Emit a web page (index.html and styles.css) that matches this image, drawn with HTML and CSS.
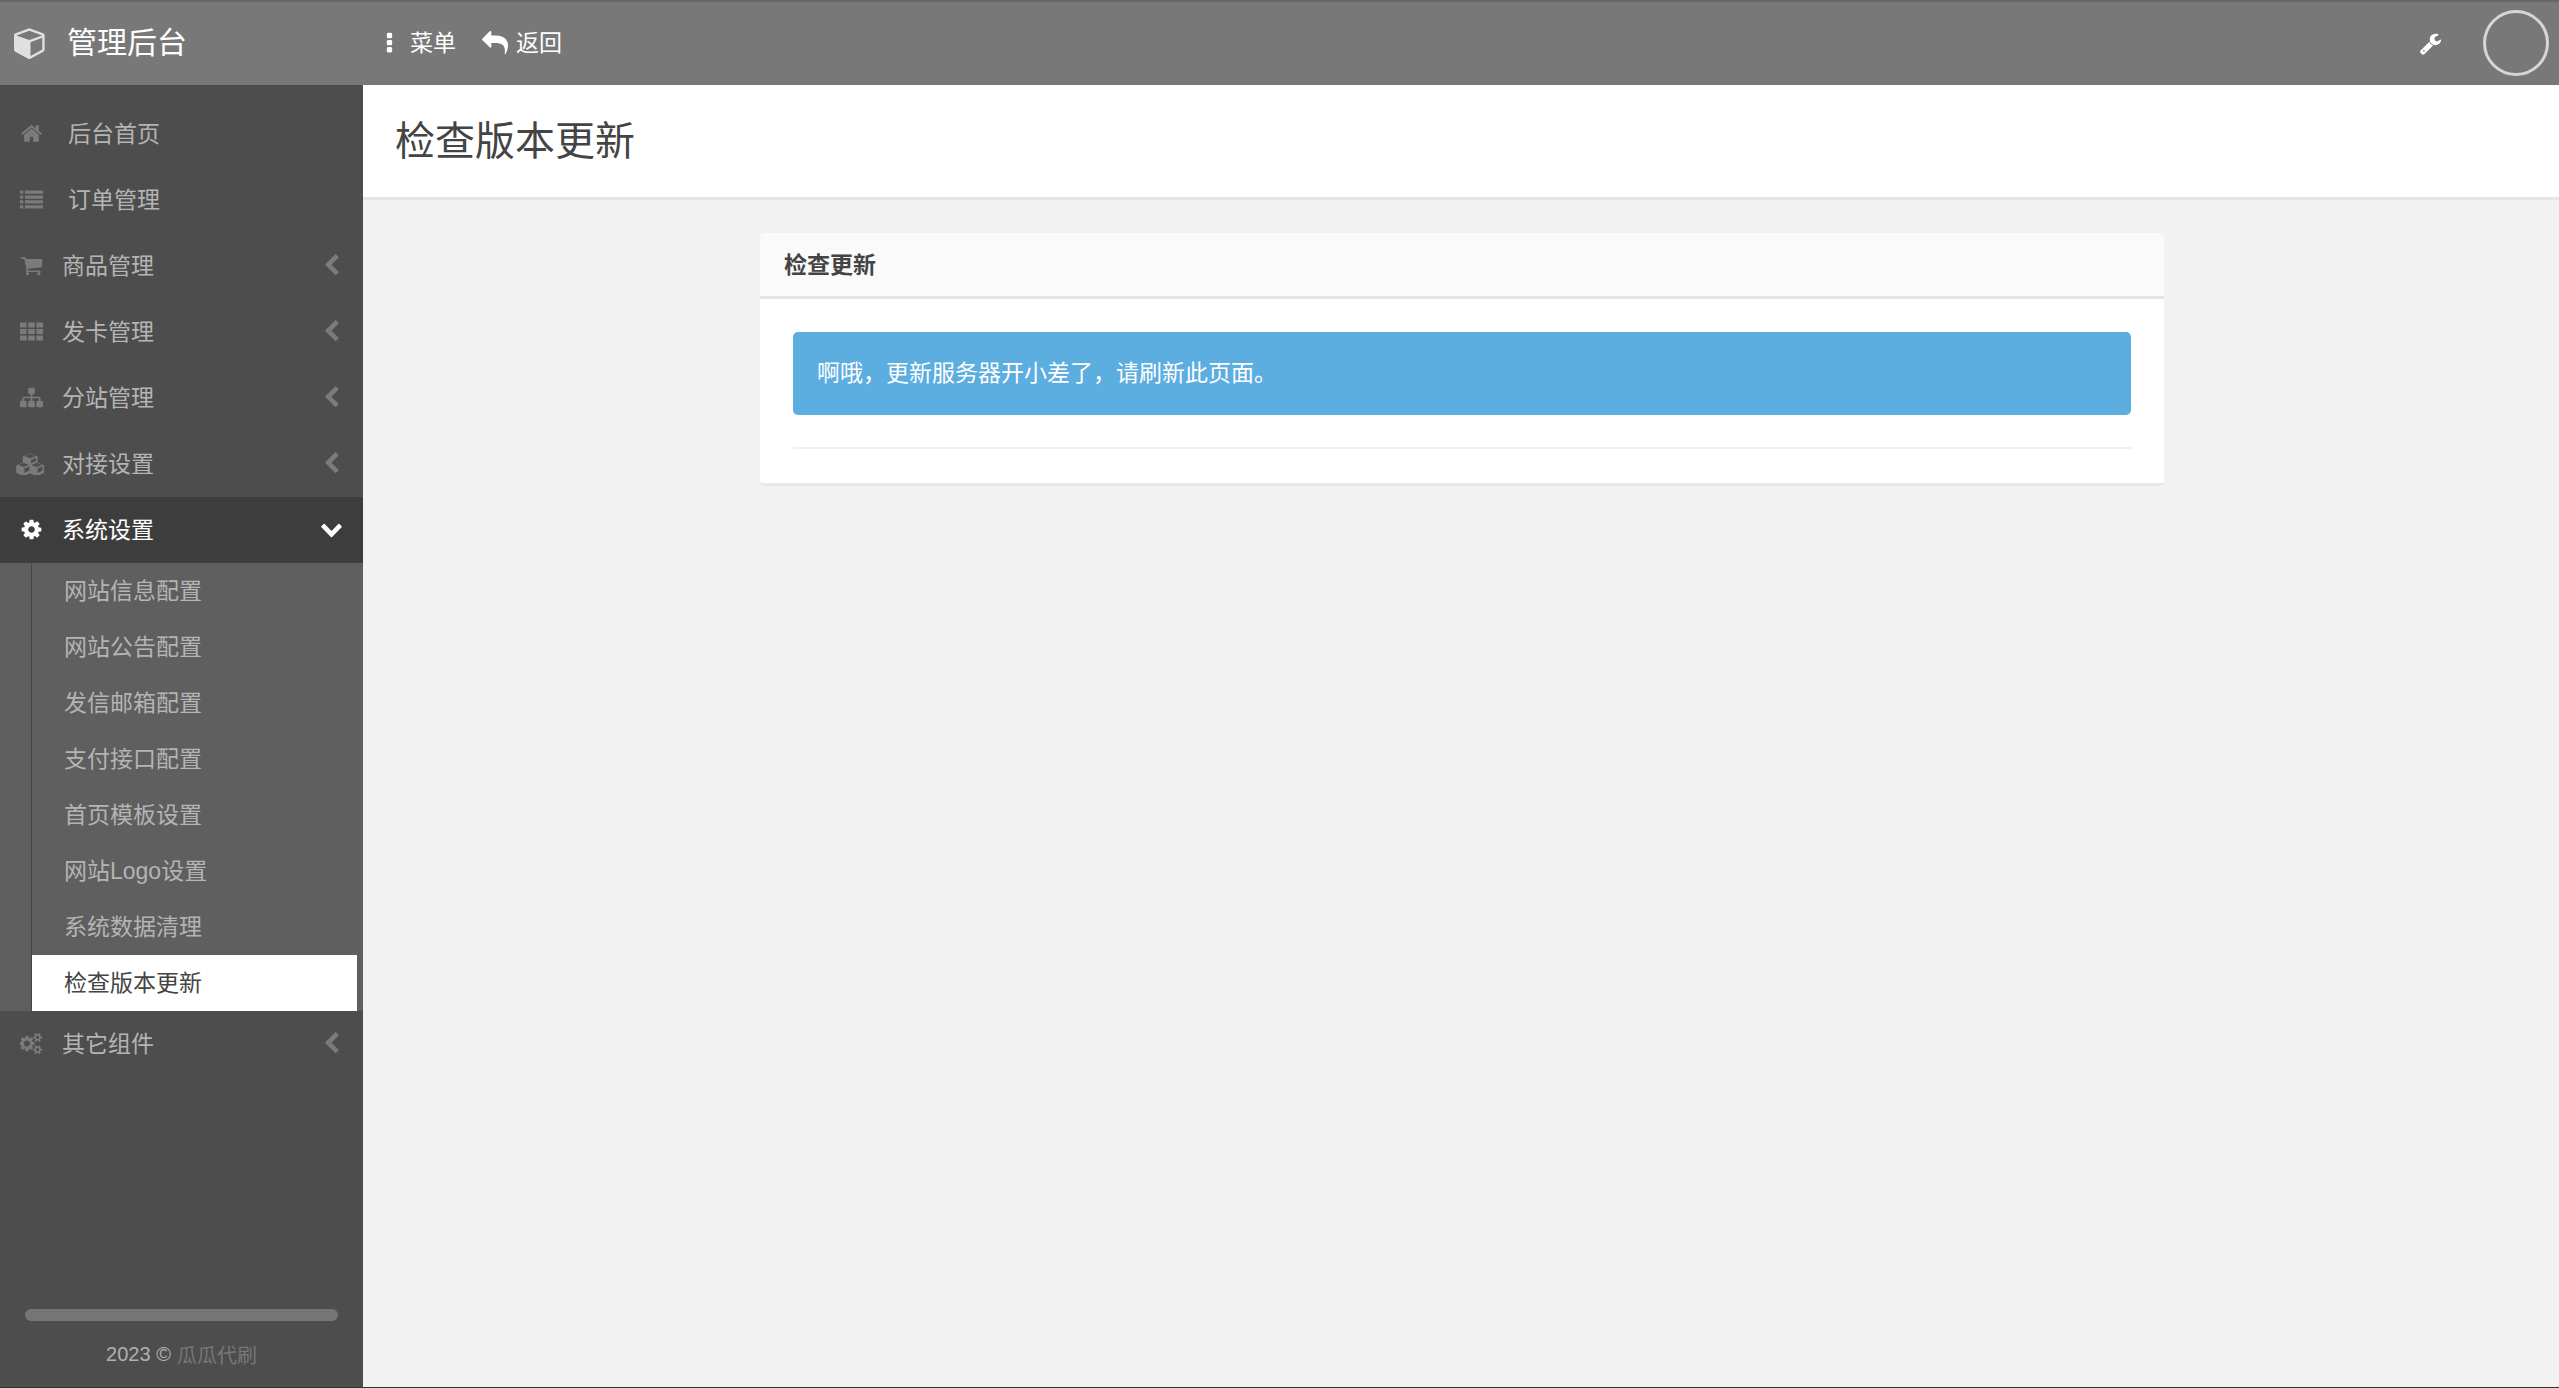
FILE: index.html
```html
<!DOCTYPE html>
<html lang="zh-CN">
<head>
<meta charset="utf-8">
<title>检查版本更新</title>
<link rel="stylesheet" href="styles.css">
</head>
<body>
<svg class="sprite" xmlns="http://www.w3.org/2000/svg">
  <symbol id="i-cube" viewBox="0 0 1792 1792"><path d="M896 1629l640-349v-636l-640 233v752zm-64-865l698-254-698-254-698 254zm832-252v768q0 35-18 65t-49 47l-704 384q-28 16-61 16t-61-16l-704-384q-31-17-49-47t-18-65v-768q0-40 23-73t61-47l704-256q22-8 44-8t44 8l704 256q38 14 61 47t23 73z"/></symbol>
  <symbol id="i-ellipsis" viewBox="0 0 1792 1792"><path d="M1088 1248v192q0 40-28 68t-68 28h-192q-40 0-68-28t-28-68v-192q0-40 28-68t68-28h192q40 0 68 28t28 68zm0-512v192q0 40-28 68t-68 28h-192q-40 0-68-28t-28-68v-192q0-40 28-68t68-28h192q40 0 68 28t28 68zm0-512v192q0 40-28 68t-68 28h-192q-40 0-68-28t-28-68v-192q0-40 28-68t68-28h192q40 0 68 28t28 68z"/></symbol>
  <symbol id="i-reply" viewBox="0 0 1792 1792"><path d="M1792 1120q0 166-127 451-3 7-10.500 24t-13.500 30-13 22q-12 17-28 17-15 0-23.500-10t-8.500-25q0-9 2.500-26.500t2.500-23.500q5-68 5-123 0-101-17.500-181t-48.500-138.500-80-101-105.500-69.500-133-42.500-154-21.500-175.500-6h-224v256q0 26-19 45t-45 19-45-19l-512-512q-19-19-19-45t19-45l512-512q19-19 45-19t45 19 19 45v256h224q713 0 875 403 53 134 53 333z"/></symbol>
  <symbol id="i-wrench" viewBox="0 0 1792 1792"><path d="M448 1472q0-26-19-45t-45-19-45 19-19 45 19 45 45 19 45-19 19-45zm644-420l-682 682q-37 37-90 37-52 0-91-37l-106-108q-38-36-38-90 0-53 38-91l681-681q39 98 114.500 173.500t173.500 114.500zm634-435q0 39-23 106-47 134-164.500 217.500t-258.500 83.500q-185 0-316.500-131.500t-131.500-316.500 131.500-316.500 316.500-131.500q58 0 121.500 16.500t107.500 46.500q16 11 16 28t-16 28l-293 169v224l193 107q5-3 79-48.500t135.500-81 70.500-35.500q15 0 23.500 10t8.500 25z"/></symbol>
  <symbol id="i-home" viewBox="0 0 1792 1792"><path d="M1472 992v480q0 26-19 45t-45 19h-384v-384h-256v384h-384q-26 0-45-19t-19-45v-480q0-1 .5-3t.5-3l575-474 575 474q1 2 1 6zm223-69l-62 74q-8 9-21 11h-3q-13 0-21-7l-692-577-692 577q-12 8-24 7-13-2-21-11l-62-74q-8-10-7-23.500t11-21.500l719-599q32-26 76-26t76 26l244 204v-195q0-14 9-23t23-9h192q14 0 23 9t9 23v408l219 182q10 8 11 21.500t-7 23.500z"/></symbol>
  <symbol id="i-list" viewBox="0 0 1792 1792"><path d="M0 192h256v256h-256zM384 192h1408v256h-1408zM0 576h256v256h-256zM384 576h1408v256h-1408zM0 960h256v256h-256zM384 960h1408v256h-1408zM0 1344h256v256h-256zM384 1344h1408v256h-1408z"/></symbol>
  <symbol id="i-cart" viewBox="0 0 1792 1792"><path d="M704 1536q0 52-38 90t-90 38-90-38-38-90 38-90 90-38 90 38 38 90zm896 0q0 52-38 90t-90 38-90-38-38-90 38-90 90-38 90 38 38 90zm128-1088v512q0 24-16.500 42.500t-40.500 21.500l-1044 122q13 60 13 70 0 16-24 64h920q26 0 45 19t19 45-19 45-45 19h-1024q-26 0-45-19t-19-45q0-11 8-31.500t16-36 21.500-40 15.500-29.500l-177-823h-204q-26 0-45-19t-19-45 19-45 45-19h256q16 0 28.500 6.500t19.500 15.500 13 24.500 8 26 5.500 29.500 4.500 26h1201q26 0 45 19t19 45z"/></symbol>
  <symbol id="i-th" viewBox="0 0 1792 1792"><path d="M0 192h512v384h-512zM640 192h512v384h-512zM1280 192h512v384h-512zM0 704h512v384h-512zM640 704h512v384h-512zM1280 704h512v384h-512zM0 1216h512v384h-512zM640 1216h512v384h-512zM1280 1216h512v384h-512z"/></symbol>
  <symbol id="i-sitemap" viewBox="0 0 1792 1792"><path d="M1792 1248v320q0 40-28 68t-68 28h-320q-40 0-68-28t-28-68v-320q0-40 28-68t68-28h96v-192h-512v192h96q40 0 68 28t28 68v320q0 40-28 68t-68 28h-320q-40 0-68-28t-28-68v-320q0-40 28-68t68-28h96v-192h-512v192h96q40 0 68 28t28 68v320q0 40-28 68t-68 28h-320q-40 0-68-28t-28-68v-320q0-40 28-68t68-28h96v-192q0-52 38-90t90-38h512v-192h-96q-40 0-68-28t-28-68v-320q0-40 28-68t68-28h320q40 0 68 28t28 68v320q0 40-28 68t-68 28h-96v192h512q52 0 90 38t38 90v192h96q40 0 68 28t28 68z"/></symbol>
  <symbol id="i-cubes" viewBox="0 0 2304 1792"><path d="M640 1632l384-192v-314l-384 164v342zm-64-454l404-173-404-173-404 173zm1088 454l384-192v-314l-384 164v342zm-64-454l404-173-404-173-404 173zm-448-293l384-165v-266l-384 164v267zm-64-379l441-189-441-189-441 189zm1088 618v416q0 36-19 67t-52 47l-448 224q-25 14-57 14t-57-14l-448-224q-4-2-7-4-2 2-6 4l-448 224q-25 14-57 14t-57-14l-448-224q-33-16-52-47t-19-67v-416q0-38 21.500-70t56.500-48l434-186v-400q0-38 21.500-70t56.500-48l448-192q23-10 50-10t50 10l448 192q35 16 56.500 48t21.500 70v400l434 186q36 16 57 48t21 70z"/></symbol>
  <symbol id="i-cog" viewBox="0 0 1792 1792"><path d="M1152 896q0-106-75-181t-181-75-181 75-75 181 75 181 181 75 181-75 75-181zm512-109v222q0 12-8 23t-20 13l-185 28q-19 54-39 91 35 50 107 138 10 12 10 25t-9 23q-27 37-99 108t-94 71q-12 0-26-9l-138-108q-44 23-91 38-16 136-29 186-7 28-36 28h-222q-14 0-24.500-8.500t-11.500-21.500l-28-184q-49-16-90-37l-141 107q-10 9-25 9-14 0-25-11-126-114-165-168-7-10-7-23 0-12 8-23 15-21 51-66.500t54-70.500q-27-50-41-99l-183-27q-13-2-21-12.500t-8-23.500v-222q0-12 8-23t19-13l186-28q14-46 39-92-40-57-107-138-10-12-10-24 0-10 9-23 26-36 98.500-107.500t94.500-71.500q13 0 26 10l138 107q44-23 91-38 16-136 29-186 7-28 36-28h222q14 0 24.500 8.500t11.500 21.500l28 184q49 16 90 37l142-107q9-9 24-9 13 0 25 10 129 119 165 170 7 8 7 22 0 12-8 23-15 21-51 66.500t-54 70.500q26 50 41 98l183 28q13 2 21 12.500t8 23.500z"/></symbol>
  <symbol id="i-cogs" viewBox="0 0 1920 1792"><path d="M832 896q0-106-75-181t-181-75-181 75-75 181 75 181 181 75 181-75 75-181zm768 512q0-52-38-90t-90-38-90 38-38 90q0 53 37.500 90.500t90.500 37.500 90.500-37.500 37.500-90.500zm0-1024q0-52-38-90t-90-38-90 38-38 90q0 53 37.500 90.500t90.500 37.500 90.500-37.500 37.500-90.500zm-384 421v185q0 10-7 19.500t-16 10.500l-155 24q-11 35-32 76 34 48 90 115 7 11 7 20 0 12-7 19-23 30-82.500 89.500t-78.500 59.500q-11 0-21-7l-115-90q-37 19-77 31-11 108-23 155-7 24-30 24h-186q-11 0-20-7.500t-10-17.500l-23-153q-34-10-75-31l-118 89q-7 7-20 7-11 0-21-8-144-133-144-160 0-9 7-19 10-14 41-53t47-61q-23-44-35-82l-152-24q-10-1-17-9.500t-7-19.500v-185q0-10 7-19.500t16-10.500l155-24q11-35 32-76-34-48-90-115-7-11-7-20 0-12 7-20 22-30 82-89t79-59q11 0 21 7l115 90q34-18 77-32 11-108 23-154 7-24 30-24h186q11 0 20 7.500t10 17.500l23 153q34 10 75 31l118-89q8-7 20-7 11 0 21 8 144 133 144 160 0 8-7 19-12 16-42 54t-45 60q23 48 34 82l152 23q10 2 17 10.500t7 19.500zm640 533v140q0 16-149 31-12 27-30 52 51 113 51 138 0 4-4 7-122 71-124 71-8 0-46-47t-52-68q-20 2-30 2t-30-2q-14 21-52 68t-46 47q-2 0-124-71-4-3-4-7 0-25 51-138-18-25-30-52-149-15-149-31v-140q0-16 149-31 13-29 30-52-51-113-51-138 0-4 4-7 4-2 35-20t59-34 30-16q8 0 46 46.500t52 67.500q20-2 30-2t30 2q51-71 92-112l6-2q4 0 124 70 4 3 4 7 0 25-51 138 17 23 30 52 149 15 149 31zm0-1024v140q0 16-149 31-12 27-30 52 51 113 51 138 0 4-4 7-122 71-124 71-8 0-46-47t-52-68q-20 2-30 2t-30-2q-14 21-52 68t-46 47q-2 0-124-71-4-3-4-7 0-25 51-138-18-25-30-52-149-15-149-31v-140q0-16 149-31 13-29 30-52-51-113-51-138 0-4 4-7 4-2 35-20t59-34 30-16q8 0 46 46.500t52 67.500q20-2 30-2t30 2q51-71 92-112l6-2q4 0 124 70 4 3 4 7 0 25-51 138 17 23 30 52 149 15 149 31z"/></symbol>
  <symbol id="i-left" viewBox="0 0 1792 1792"><path d="M1427 301l-531 531 531 531q19 19 19 45t-19 45l-166 166q-19 19-45 19t-45-19l-742-742q-19-19-19-45t19-45l742-742q19-19 45-19t45 19l166 166q19 19 19 45t-19 45z"/></symbol>
  <symbol id="i-down" viewBox="0 0 1792 1792"><path d="M1683 808l-742 741q-19 19-45 19t-45-19l-742-741q-19-19-19-45.500t19-45.500l166-165q19-19 45-19t45 19l531 531 531-531q19-19 45-19t45 19l166 165q19 19 19 45.500t-19 45.500z"/></symbol>
</svg>

<header class="topbar">
  <a class="brand">
    <svg class="brand-icon"><use href="#i-cube"/></svg>
    <span class="brand-name">管理后台</span>
  </a>
  <nav class="top-actions">
    <a class="top-link"><svg class="top-icon top-icon-dots"><use href="#i-ellipsis"/></svg><span class="top-text">菜单</span></a>
    <a class="top-link"><svg class="top-icon top-icon-reply"><use href="#i-reply"/></svg><span class="top-text">返回</span></a>
  </nav>
  <div class="top-right">
    <svg class="tool-icon"><use href="#i-wrench"/></svg>
    <span class="avatar"></span>
  </div>
</header>

<div class="layout">
  <aside class="sidebar">
    <ul class="menu">
      <li class="menu-row"><span class="menu-icon"><svg class="ico"><use href="#i-home"/></svg></span><span class="menu-label menu-label-plain">后台首页</span></li>
      <li class="menu-row"><span class="menu-icon"><svg class="ico"><use href="#i-list"/></svg></span><span class="menu-label menu-label-plain">订单管理</span></li>
      <li class="menu-row"><span class="menu-icon"><svg class="ico"><use href="#i-cart"/></svg></span><span class="menu-label">商品管理</span><svg class="arrow"><use href="#i-left"/></svg></li>
      <li class="menu-row"><span class="menu-icon"><svg class="ico"><use href="#i-th"/></svg></span><span class="menu-label">发卡管理</span><svg class="arrow"><use href="#i-left"/></svg></li>
      <li class="menu-row"><span class="menu-icon"><svg class="ico"><use href="#i-sitemap"/></svg></span><span class="menu-label">分站管理</span><svg class="arrow"><use href="#i-left"/></svg></li>
      <li class="menu-row"><span class="menu-icon"><svg class="ico ico-wide"><use href="#i-cubes"/></svg></span><span class="menu-label">对接设置</span><svg class="arrow"><use href="#i-left"/></svg></li>
      <li class="menu-row menu-row-open"><span class="menu-icon"><svg class="ico"><use href="#i-cog"/></svg></span><span class="menu-label">系统设置</span><svg class="arrow arrow-down"><use href="#i-down"/></svg></li>
      <li class="submenu-wrap">
        <ul class="submenu">
          <li class="sub-item">网站信息配置</li>
          <li class="sub-item">网站公告配置</li>
          <li class="sub-item">发信邮箱配置</li>
          <li class="sub-item">支付接口配置</li>
          <li class="sub-item">首页模板设置</li>
          <li class="sub-item">网站Logo设置</li>
          <li class="sub-item">系统数据清理</li>
          <li class="sub-item sub-item-active">检查版本更新</li>
        </ul>
      </li>
      <li class="menu-row"><span class="menu-icon"><svg class="ico"><use href="#i-cogs"/></svg></span><span class="menu-label">其它组件</span><svg class="arrow"><use href="#i-left"/></svg></li>
    </ul>
    <div class="side-scroll"></div>
    <footer class="side-footer">2023 © <a class="side-footer-link">瓜瓜代刷</a></footer>
  </aside>

  <main class="content">
    <div class="page-head"><h1 class="page-title">检查版本更新</h1></div>
    <section class="card">
      <h2 class="card-head">检查更新</h2>
      <div class="card-body">
        <div class="alert">啊哦，更新服务器开小差了，请刷新此页面。</div>
        <hr class="rule">
      </div>
    </section>
  </main>
</div>
</body>
</html>
```

FILE: styles.css
```css
* { box-sizing: border-box; }
html, body { height: 100%; }
body {
  margin: 0;
  display: flex;
  flex-direction: column;
  height: 1388px;
  overflow: hidden;
  background: #f2f2f2;
  border-bottom: 1px solid #333;
  color: #444;
  font-family: "Liberation Sans", "Noto Sans CJK SC", sans-serif;
  font-size: 23px;
}
ul { list-style: none; margin: 0; padding: 0; }
.sprite { display: none; }

.topbar {
  flex: none;
  height: 85px;
  display: flex;
  align-items: center;
  background: #787878;
  border-top: 2px solid #666;
  color: #fff;
}
.brand {
  width: 363px;
  flex: none;
  height: 100%;
  display: flex;
  align-items: center;
  padding: 0 0 2px 14px;
}
.brand-icon { width: 33px; height: 33px; fill: #e0e0e0; flex: none; }
.brand-name { margin-left: 20px; font-size: 30px; line-height: 1; color: #fff; }
.top-actions { display: flex; align-items: center; margin-left: 15px; gap: 26px; padding-bottom: 1px; }
.top-link { display: flex; align-items: center; font-size: 23px; color: #fff; }
.top-text { line-height: 1; }
.top-icon { fill: #fff; flex: none; }
.top-icon-dots { width: 25px; height: 25px; margin: 0 8px 0 -1px; }
.top-icon-reply { width: 26px; height: 26px; margin-right: 8px; }
.top-right { margin-left: auto; display: flex; align-items: center; padding-right: 10px; }
.tool-icon { width: 23px; height: 23px; fill: #fff; margin-right: 41px; }
.avatar {
  width: 66px;
  height: 66px;
  margin-bottom: 1px;
  border: 3px solid #d6d6d6;
  border-radius: 50%;
}

.layout { flex: 1; min-height: 0; display: flex; }
.sidebar {
  width: 363px;
  flex: none;
  display: flex;
  flex-direction: column;
  background: #4d4d4d;
  color: #b4b4b4;
}
.menu { flex: 1; padding-top: 16px; }
.menu-row {
  height: 66px;
  display: flex;
  align-items: center;
  padding-right: 20px;
}
.menu-icon { width: 63px; flex: none; display: flex; justify-content: center; padding-right: 1px; }
.ico { width: 23px; height: 23px; fill: #7b7b7b; display: block; margin-bottom: 2px; }
.ico-wide { width: 30px; margin-left: -1px; }
.menu-label { flex: 1; line-height: 1; margin-left: -1px; }
.menu-label-plain { padding-left: 6px; }
.arrow { width: 23px; height: 23px; fill: #7b7b7b; flex: none; margin-bottom: 2px; }
.menu-row-open { background: #3d3d3d; color: #fff; }
.menu-row-open .ico { fill: #fff; }
.arrow-down { fill: #fff; margin-bottom: 4px; }
.submenu-wrap { background: #5f5f5f; }
.submenu { margin-left: 31px; border-left: 1px solid #454545; padding-right: 6px; }
.sub-item { height: 56px; display: flex; align-items: center; padding: 0 0 4px 32px; color: #b4b4b4; }
.sub-item-active { background: #fff; color: #444; }
.side-scroll { flex: none; height: 12px; margin: 0 25px; background: #757575; border-radius: 6px; }
.side-footer {
  flex: none;
  height: 66px;
  display: flex;
  align-items: center;
  justify-content: center;
  gap: 6px;
  font-size: 20px;
  color: #b0b0b0;
}
.side-footer-link { color: #777; }

.content { flex: 1; min-width: 0; }
.page-head {
  height: 115px;
  display: flex;
  align-items: center;
  padding-left: 32px;
  background: #fff;
  border-bottom: 3px solid #e5e5e5;
}
.page-title { margin: 0; font-size: 40px; font-weight: 400; color: #444; line-height: 1; }
.card {
  width: 1404px;
  margin: 33px 0 0 397px;
  background: #fff;
  border-bottom: 3px solid #e8e8e8;
  border-radius: 5px;
}
.card-head {
  margin: 0;
  height: 66px;
  display: flex;
  align-items: center;
  padding: 0 0 4px 24px;
  font-size: 23px;
  font-weight: 700;
  color: #444;
  background: #fafafa;
  border-bottom: 3px solid #e5e5e5;
  border-radius: 5px 5px 0 0;
}
.card-body { padding: 33px 33px 0; height: 184px; }
.alert {
  height: 83px;
  display: flex;
  align-items: center;
  padding: 0 0 5px 24px;
  background: #5cade0;
  color: #fff;
  border-radius: 5px;
}
.rule { margin: 32px 0 0; border: 0; border-top: 2px solid #f0f0f0; }
```
